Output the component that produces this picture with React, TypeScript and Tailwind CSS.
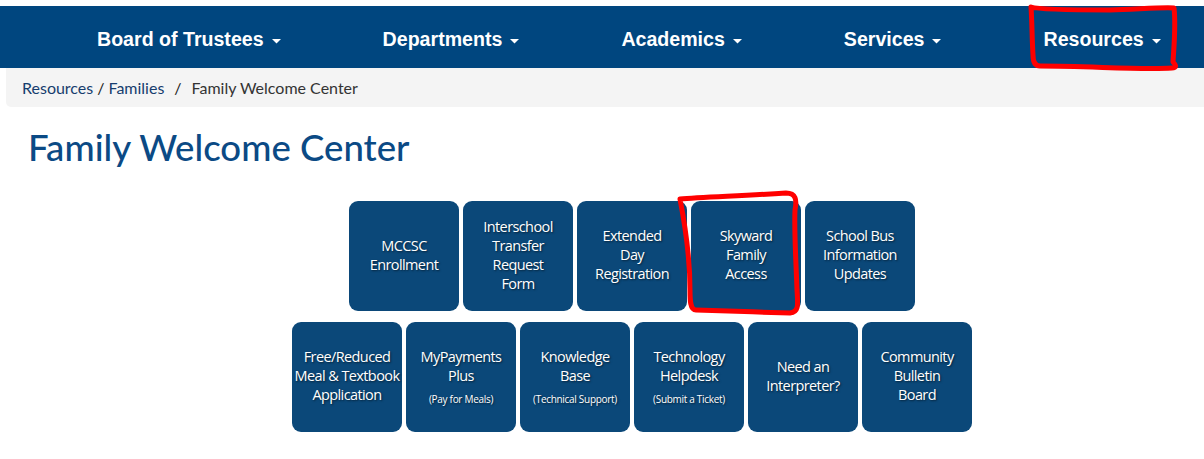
import React from 'react'

const navItems = ['Board of Trustees', 'Departments', 'Academics', 'Services', 'Resources']

type Tile = { lines: string[]; sub?: string }

const topRow: Tile[] = [
  { lines: ['MCCSC', 'Enrollment'] },
  { lines: ['Interschool', 'Transfer', 'Request', 'Form'] },
  { lines: ['Extended', 'Day', 'Registration'] },
  { lines: ['Skyward', 'Family', 'Access'] },
  { lines: ['School Bus', 'Information', 'Updates'] },
]

const bottomRow: Tile[] = [
  { lines: ['Free/Reduced', 'Meal & Textbook', 'Application'] },
  { lines: ['MyPayments', 'Plus'], sub: '(Pay for Meals)' },
  { lines: ['Knowledge', 'Base'], sub: '(Technical Support)' },
  { lines: ['Technology', 'Helpdesk'], sub: '(Submit a Ticket)' },
  { lines: ['Need an', 'Interpreter?'] },
  { lines: ['Community', 'Bulletin', 'Board'] },
]

const Caret = () => (
  <svg width="9" height="5" viewBox="0 0 9 5" className="ml-[8px] mt-[3px]">
    <path d="M0 0 L9 0 L4.5 4.5 Z" fill="#ffffff" />
  </svg>
)

const TileCard = ({ tile }: { tile: Tile }) => (
  <a
    href="#"
    className="flex h-[110px] w-[110px] flex-col items-center justify-center rounded-[9px] bg-[#0b4879] text-center text-white [text-shadow:1px_1px_2px_rgba(0,0,0,0.55)]"
    style={{ fontFamily: '"Open Sans", sans-serif' }}
  >
    <div className="-mt-[3px] text-[14.5px] leading-[19px] tracking-[-0.6px]">
      {tile.lines.map((l) => (
        <div key={l} className="whitespace-nowrap">{l}</div>
      ))}
    </div>
    {tile.sub && (
      <div className="mt-[8px] whitespace-nowrap text-[10px] leading-[12px] tracking-[-0.3px]">{tile.sub}</div>
    )}
  </a>
)

export default function App() {
  return (
    <div className="relative min-h-[459px] w-[1204px] bg-white">
      <div className="h-[6px] bg-white" />
      <nav
        className="flex h-[62px] items-center bg-[#00467f] pl-[97px] pt-[6px]"
        style={{ fontFamily: '"Liberation Sans", Arial, sans-serif' }}
      >
        <ul className="flex items-center gap-[102px]">
          {navItems.map((item) => (
            <li key={item} className="flex items-center text-[19.6px] font-bold text-white">
              {item}
              <Caret />
            </li>
          ))}
        </ul>
      </nav>

      <div
        className="ml-[6px] flex h-[39px] items-center rounded-bl-[5px] bg-[#f4f4f4] pl-[16px] text-[16px]"
        style={{ fontFamily: 'Lato, "Noto Sans", sans-serif' }}
      >
        <a href="#" className="text-[#163d6e]">Resources</a>
        <span className="mx-[4px] text-[#222]">/</span>
        <a href="#" className="text-[#163d6e]">Families</a>
        <span className="mx-[10px] text-[#222]">/</span>
        <span className="text-[#333]">Family Welcome Center</span>
      </div>

      <h1
        className="ml-[28px] mt-[17px] text-[36.6px] leading-[46px] text-[#0b4a85]"
        style={{ fontFamily: 'Lato, "Noto Sans", sans-serif', fontWeight: 500 }}
      >
        Family Welcome Center
      </h1>

      <div className="mt-[31px] flex flex-col items-center gap-[11px] pl-[60px]">
        <div className="flex gap-[4px]">
          {topRow.map((t) => (
            <TileCard key={t.lines.join(' ')} tile={t} />
          ))}
        </div>
        <div className="flex gap-[4px]">
          {bottomRow.map((t) => (
            <TileCard key={t.lines.join(' ')} tile={t} />
          ))}
        </div>
      </div>

      {/* red hand-drawn annotations */}
      <svg className="pointer-events-none absolute left-0 top-0" width="1204" height="459" viewBox="0 0 1204 459">
        <path
          d="M1031 7 C1040 10 1080 10 1110 10 C1140 9 1165 7 1174 8 C1176 25 1174 45 1173 62 C1177 66 1176 68 1172 68 C1140 70 1090 66 1040 66 C1034 66 1033 60 1033 55 C1032 40 1032 20 1031 7 Z"
          fill="none"
          stroke="#ff0000"
          strokeWidth="5"
          strokeLinejoin="round"
        />
        <path
          d="M680 199 C700 197 740 196 786 193 C796 193 797 200 795 210 C794 230 796 260 797 290 C798 305 799 312 790 313 C760 312 720 311 696 310 C690 310 690 300 690 290 C690 260 686 230 680 199 Z"
          fill="none"
          stroke="#ff0000"
          strokeWidth="5"
          strokeLinejoin="round"
        />
      </svg>
    </div>
  )
}
